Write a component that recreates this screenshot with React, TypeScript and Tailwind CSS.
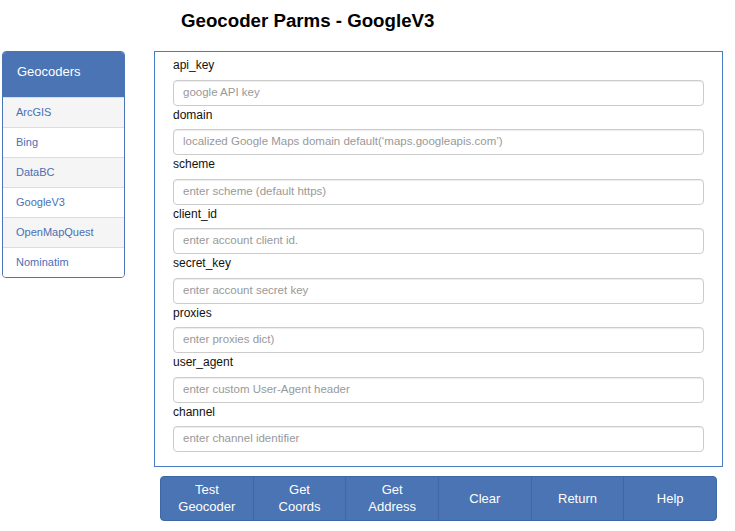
import React from "react";

const geocoders = ["ArcGIS", "Bing", "DataBC", "GoogleV3", "OpenMapQuest", "Nominatim"];

const fields = [
  { name: "api_key", placeholder: "google API key" },
  { name: "domain", placeholder: "localized Google Maps domain default(\u2018maps.googleapis.com\u2019)" },
  { name: "scheme", placeholder: "enter scheme (default https)" },
  { name: "client_id", placeholder: "enter account client id." },
  { name: "secret_key", placeholder: "enter account secret key" },
  { name: "proxies", placeholder: "enter proxies dict)" },
  { name: "user_agent", placeholder: "enter custom User-Agent header" },
  { name: "channel", placeholder: "enter channel identifier" },
];

const buttons = [
  ["Test", "Geocoder"],
  ["Get", "Coords"],
  ["Get", "Address"],
  ["Clear"],
  ["Return"],
  ["Help"],
];

export default function App() {
  return (
    <div className="h-[531px] w-[735px] bg-white font-['Liberation_Sans',Arial,sans-serif] text-black">
      <div className="h-[51px] pl-[181px] pt-[9px] text-[18.7px] font-bold leading-[24px]">
        Geocoder Parms - GoogleV3
      </div>

      <div className="flex items-start">
        <div className="ml-[2px] w-[123px] overflow-hidden rounded-[4px] border border-[#4a74b4]">
          <div className="h-[45px] bg-[#4a74b4] pl-[14px] pt-[11px] text-[13px] leading-[17px] text-white">
            Geocoders
          </div>
          {geocoders.map((g, i) => (
            <div
              key={g}
              className={`flex h-[30px] items-center border-t border-[#dddddd] pl-[13px] text-[11px] text-[#4a6fb5] ${
                i % 2 === 0 ? "bg-[#f5f5f5]" : "bg-white"
              }`}
            >
              {g}
            </div>
          ))}
        </div>

        <div className="ml-[29px] w-[569px] border border-[#4a7cc4] px-[18px] pb-[14px] pt-[4px]">
          {fields.map((f) => (
            <div key={f.name}>
              <div className="h-[23.5px] text-[12px] leading-[18px] text-[#111]">{f.name}</div>
              <div className="flex h-[26px] items-center rounded-[4px] border border-[#cccccc] bg-white pl-[9px] text-[11.5px] text-[#999999] shadow-[inset_0_1px_1px_rgba(0,0,0,0.075)]">
                {f.placeholder}
              </div>
            </div>
          ))}
        </div>
      </div>

      <div className="ml-[160px] mt-[9px] flex h-[45px] w-[557px] overflow-hidden rounded-[4px] border border-[#3f67a5] bg-[#4a74b4]">
        {buttons.map((b, i) => (
          <div
            key={i}
            className={`flex flex-1 flex-col items-center justify-center pb-[1px] text-[13px] leading-[17px] text-white ${
              i > 0 ? "border-l border-[#3f67a5]" : ""
            }`}
          >
            {b.map((line) => (
              <span key={line}>{line}</span>
            ))}
          </div>
        ))}
      </div>
    </div>
  );
}
